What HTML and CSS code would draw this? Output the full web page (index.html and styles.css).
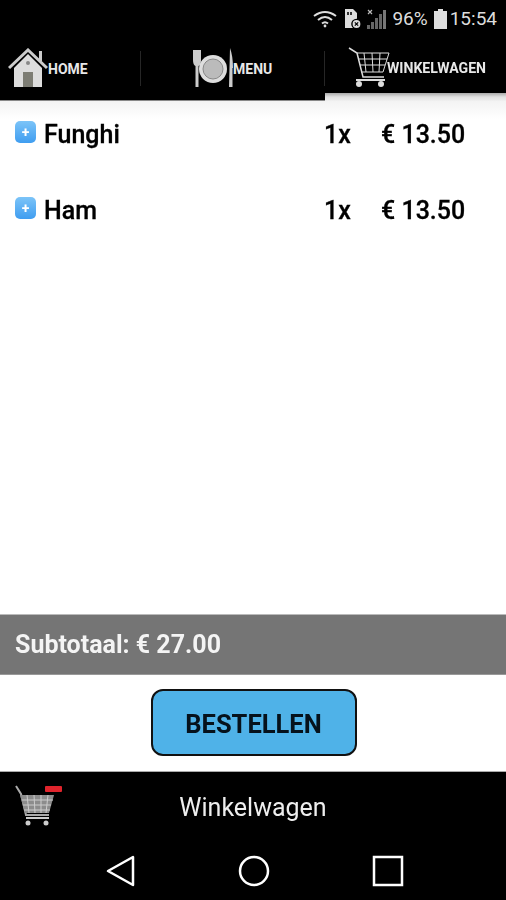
FILE: index.html
```html
<!DOCTYPE html>
<html lang="en">
<head>
    <meta charset="UTF-8">
    <meta name="viewport" content="width=device-width, initial-scale=1.0">
    <title>Winkelwagen</title>
    <link rel="stylesheet" href="styles.css">
</head>
<body>
    <div class="phone">
        <div class="statusbar">
            <svg class="st-wifi" width="24" height="18" viewBox="0 0 24 18" fill="none" stroke="#ddd" stroke-width="2">
                <path d="M1 6 Q12 -2 23 6"/>
                <path d="M5 10 Q12 4 19 10"/>
                <path d="M9 13.5 Q12 11 15 13.5"/>
                <circle cx="12" cy="16" r="1.4" fill="#ddd" stroke="none"/>
            </svg>
            <svg class="st-sim" width="18" height="22" viewBox="0 0 18 22">
                <path d="M1 1 H9 L13 5 V20 H1 Z" fill="#ddd"/>
                <rect x="3" y="4" width="2" height="3" fill="#333"/>
                <rect x="6" y="4" width="2" height="3" fill="#333"/>
                <circle cx="12.5" cy="16" r="4.6" fill="#ddd" stroke="#000" stroke-width="1.4"/>
                <path d="M10.8 14.3 L14.2 17.7 M14.2 14.3 L10.8 17.7" stroke="#000" stroke-width="1.2"/>
            </svg>
            <svg class="st-signal" width="22" height="22" viewBox="0 0 22 22">
                <path d="M2 2 L6 6 M6 2 L2 6" stroke="#bbb" stroke-width="1.2"/>
                <rect x="1" y="17" width="3" height="4" fill="#666"/>
                <rect x="5" y="14" width="3" height="7" fill="#666"/>
                <rect x="9" y="10" width="3" height="11" fill="#666"/>
                <rect x="13" y="6" width="3" height="15" fill="#666"/>
                <rect x="17" y="2" width="3" height="19" fill="#777"/>
            </svg>
            <span class="st-pct">96%</span>
            <svg class="st-batt" width="13" height="20" viewBox="0 0 13 20">
                <rect x="4" y="0" width="5" height="2" fill="#ddd"/>
                <rect x="0" y="2" width="13" height="18" fill="#ddd"/>
            </svg>
            <span class="st-time">15:54</span>
        </div>

        <div class="tabs">
            <div class="tab tab-home">
                <svg width="42" height="42" viewBox="0 0 42 42">
                    <path d="M1 20 L20 2 L39 20" fill="none" stroke="#ccc" stroke-width="3"/>
                    <rect x="31" y="3" width="3" height="10" fill="#ccc"/>
                    <path d="M6 20 L20 6 L34 20 V39 H6 Z" fill="#ddd"/>
                    <circle cx="20" cy="15" r="2" fill="#888"/>
                    <rect x="15" y="24" width="10" height="15" fill="#7d7d74"/>
                </svg>
                <span>HOME</span>
                <i class="tab-sep"></i>
            </div>
            <div class="tab tab-menu">
                <svg width="42" height="42" viewBox="0 0 42 42">
                    <path d="M1 2 H9 V12 Q9 17 6.500 18 V39 H3.500 V18 Q1 17 1 12 Z" fill="#ccc"/>
                    <circle cx="21" cy="21" r="14" fill="#ddd"/>
                    <circle cx="21" cy="21" r="10" fill="#bbb" stroke="#888" stroke-width="1"/>
                    <path d="M38 0 Q41 8 41 20 H40.500 V39 H37 Z" fill="#ccc"/>
                </svg>
                <span>MENU</span>
                <i class="tab-sep"></i>
            </div>
            <div class="tab tab-cart">
                <svg width="42" height="42" viewBox="0 0 42 42" fill="none" stroke="#ddd">
                    <path d="M1 1 L9 6 L15 30 H36" stroke-width="1.500"/>
                    <path d="M9 6 H41 L35 25 H13 M11 12 H39 M12 18 H37 M16 6 L18 25 M24 6 L25 25 M32 6 L31 25" stroke-width="1"/>
                    <path d="M8 33 H37" stroke-width="2"/>
                    <circle cx="11" cy="37" r="3" fill="#ddd" stroke="none"/>
                    <circle cx="33" cy="37" r="3" fill="#ddd" stroke="none"/>
                </svg>
                <span>WINKELWAGEN</span>
            </div>
        </div>

        <div class="cart-list">
            <div class="cart-row">
                <span class="plus">+</span>
                <span class="name">Funghi</span>
                <span class="qty">1x</span>
                <span class="price">€ 13.50</span>
            </div>
            <div class="cart-row">
                <span class="plus">+</span>
                <span class="name">Ham</span>
                <span class="qty">1x</span>
                <span class="price">€ 13.50</span>
            </div>
        </div>

        <div class="subtotal">Subtotaal: € 27.00</div>
        <div class="order">
            <button class="order-btn">BESTELLEN</button>
        </div>

        <div class="footer">
            <div class="footer-title">
                <svg class="footer-cart" width="48" height="46" viewBox="0 0 48 46">
                    <path d="M1 1 L6 9 L11 30 H34" fill="none" stroke="#aaa" stroke-width="2"/>
                    <path d="M5 10 H39 L34 28 H10 Z" fill="#8c8c8c"/>
                    <path d="M7 15 H38 M8 20 H36 M9 25 H35 M12 10 L14 28 M19 10 L20 28 M26 10 L26 28 M33 10 L31 28" stroke="#ccc" stroke-width="1"/>
                    <path d="M11 33 H34" stroke="#ccc" stroke-width="2"/>
                    <circle cx="13" cy="38" r="2.500" fill="#ccc"/>
                    <circle cx="31" cy="38" r="2.500" fill="#ccc"/>
                    <rect x="30" y="1" width="17" height="6" rx="1" fill="#e0242c"/>
                </svg>
                <span>Winkelwagen</span>
            </div>
            <div class="navbar">
                <svg width="30" height="32" viewBox="0 0 30 32" fill="none" stroke="#fff" stroke-width="2.500">
                    <path d="M27 2 V30 L2 16 Z" stroke-linejoin="round"/>
                </svg>
                <svg width="32" height="32" viewBox="0 0 32 32" fill="none" stroke="#fff" stroke-width="2.500">
                    <circle cx="16" cy="16" r="14"/>
                </svg>
                <svg width="32" height="32" viewBox="0 0 32 32" fill="none" stroke="#fff" stroke-width="2.500">
                    <rect x="2" y="2" width="28" height="28"/>
                </svg>
            </div>
        </div>
    </div>
</body>
</html>
```

FILE: styles.css
```css
body { margin: 0; background: #fff; font-family: Roboto, "Liberation Sans", sans-serif; color: #000; }
.phone { width: 506px; height: 900px; display: flex; flex-direction: column; overflow: hidden; filter: blur(0.45px); }

.statusbar { height: 37px; flex: none; background: #000; color: #ddd; display: flex; align-items: center; justify-content: flex-end; padding-right: 9px; font-size: 19px; }
.st-wifi { margin-right: 7px; }
.st-sim { margin-right: 4px; }
.st-signal { margin-right: 4px; }
.st-pct { margin-right: 6px; }
.st-batt { margin-right: 3px; }

.tabs { height: 64px; flex: none; display: flex; font-weight: 700; font-size: 14px; color: #e8e8e8; background: linear-gradient(#000 56px, #aaa 56px, #e2e2e2 60px, #f0f0f0 64px); }
.tab { background: #000; display: flex; align-items: center; box-sizing: border-box; }
.tab svg { flex: none; }
.tab span { margin-left: -2px; }
.tab-sep { width: 1px; height: 35px; background: #262626; margin-left: auto; }
.tab-home { width: 141px; padding-left: 8px; border-bottom: 1px solid #888; }
.tab-menu { width: 184px; padding-left: 51px; border-bottom: 1px solid #888; }
.tab-menu span { margin-left: -1px; }
.tab-cart { flex: 1; height: 56px; padding: 6px 0 0 23px; }
.tab-cart span { font-size: 14.1px; margin-left: -3px; }

.cart-list { flex: 1; background: linear-gradient(#f3f3f3, #fff 18px); }
.cart-row { height: 76px; display: flex; align-items: center; font-size: 25px; font-weight: 500; -webkit-text-stroke: 0.3px #000; padding-left: 15px; box-sizing: border-box; }
.cart-row:first-child { margin-top: -5px; }
.plus { width: 21px; height: 22px; border-radius: 5px; margin-right: 8px; margin-top: -5px; background: linear-gradient(#7cc4f8, #3f9df0); color: #fff; -webkit-text-stroke: 0; font-size: 14px; font-weight: 700; line-height: 22px; text-align: center; }
.name { width: 280px; }
.qty { width: 57px; }

.subtotal { height: 61px; flex: none; box-sizing: border-box; background: #757575; border-top: 1px solid #bbb; border-bottom: 1px solid #999; color: #f4f4f4; font-size: 25px; font-weight: 700; line-height: 59px; padding-left: 15px; }

.order { height: 96px; flex: none; box-sizing: border-box; display: flex; justify-content: center; align-items: center; padding-left: 1px; padding-bottom: 2px; }
.order-btn { width: 206px; height: 67px; background: #4fb2e8; border: 2px solid #111; border-radius: 12px; font-family: inherit; font-size: 25.5px; font-weight: 700; color: #06121c; padding: 4px 0 0; }

.footer { height: 129px; flex: none; background: #000; border-top: 1px solid #aaa; box-sizing: border-box; display: flex; flex-direction: column; }
.footer-title { height: 67px; flex: none; position: relative; display: flex; align-items: center; justify-content: center; color: #eee; font-size: 25px; padding-top: 4px; box-sizing: border-box; }
.footer-cart { position: absolute; left: 15px; top: 13px; }
.navbar { flex: 1; display: flex; align-items: flex-start; padding: 16px 0 0 106px; gap: 102px; }
.navbar svg { flex: none; }
```
